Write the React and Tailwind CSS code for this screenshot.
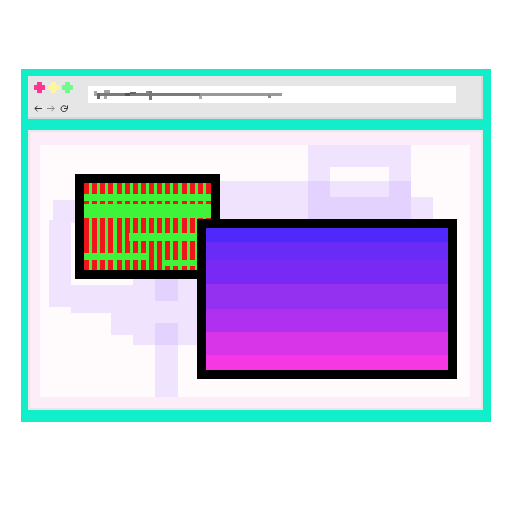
import React from "react";

const L = "#efe3fd";
const D = "#e2d2fd";
const W = "#fffbfd";

function Cross({ color }) {
  return (
    <svg width="11" height="11" viewBox="0 0 11 11" shapeRendering="crispEdges">
      <rect x="3" y="0" width="5" height="11" fill={color} />
      <rect x="0" y="3" width="11" height="5" fill={color} />
    </svg>
  );
}

function Canvas() {
  return (
    <svg width="430" height="252" viewBox="0 0 430 252" shapeRendering="crispEdges" className="absolute left-0 top-0">
      <rect x="268" y="0" width="103" height="36" fill={L} />
      <rect x="290" y="22" width="59" height="14" fill={W} />
      <rect x="268" y="36" width="103" height="60" fill={D} />
      <rect x="290" y="36" width="59" height="16" fill={L} />
      <rect x="371" y="52" width="22" height="22" fill={L} />
      <rect x="180" y="36" width="88" height="40" fill={L} />
      <rect x="13" y="55" width="255" height="20" fill={L} />
      <rect x="9" y="75" width="188" height="65" fill={L} />
      <rect x="31" y="78" width="62" height="62" fill={W} />
      <rect x="9" y="140" width="22" height="22" fill={L} />
      <rect x="31" y="140" width="40" height="28" fill={L} />
      <rect x="71" y="140" width="22" height="50" fill={L} />
      <rect x="93" y="140" width="22" height="60" fill={L} />
      <rect x="115" y="120" width="23" height="132" fill={L} />
      <rect x="115" y="120" width="23" height="36" fill={D} />
      <rect x="115" y="178" width="23" height="22" fill={D} />
      <rect x="138" y="134" width="19" height="66" fill={L} />
    </svg>
  );
}

function GreenPattern() {
  const stripes = Array.from({ length: 16 }, (_, i) => Math.round(i * 8.13));
  const G = "#3ff23a";
  return (
    <svg width="127" height="87" viewBox="0 0 127 87" shapeRendering="crispEdges" className="block">
      <rect x="0" y="0" width="127" height="87" fill={G} />
      {stripes.map((x) => (
        <rect key={x} x={x} y="0" width="5" height="87" fill="#f0151a" />
      ))}
      <rect x="0" y="11" width="127" height="7" fill={G} />
      <rect x="0" y="21" width="127" height="14" fill={G} />
      <rect x="45" y="50" width="82" height="8" fill={G} />
      <rect x="0" y="70" width="64" height="7" fill={G} />
      <rect x="79" y="77" width="48" height="6" fill={G} />
    </svg>
  );
}

function UrlScribble() {
  return (
    <svg width="200" height="12" viewBox="0 0 200 12" shapeRendering="crispEdges" className="absolute left-[6px] top-[3px]">
      <rect x="0" y="2" width="3" height="5" fill="#a3a3a3" />
      <rect x="3" y="4" width="3" height="6" fill="#666" />
      <rect x="6" y="4" width="100" height="3" fill="#7a7a7a" />
      <rect x="10" y="1" width="6" height="3" fill="#a3a3a3" />
      <rect x="10" y="7" width="3" height="3" fill="#a3a3a3" />
      <rect x="31" y="4" width="5" height="3" fill="#555" />
      <rect x="36" y="3" width="6" height="2" fill="#666" />
      <rect x="52" y="2" width="6" height="3" fill="#888" />
      <rect x="55" y="2" width="3" height="9" fill="#777" />
      <rect x="106" y="4" width="82" height="3" fill="#999" />
      <rect x="105" y="7" width="3" height="3" fill="#aaa" />
      <rect x="174" y="6" width="3" height="3" fill="#888" />
    </svg>
  );
}

export default function App() {
  return (
    <div className="w-[512px] h-[512px] bg-white pt-[69px] pl-[21px]">
      <div className="w-[470px] h-[353px] bg-[#12edca] pt-[7px] pl-[7px] flex flex-col">
        <div className="w-[455px] h-[43px] bg-[#e6e6e6] border-r-2 border-b-2 border-[#d8d8d8] flex pl-[6px] pt-[6px]">
          <div className="flex flex-col">
            <div className="flex gap-[3px]">
              <Cross color="#ff3596" />
              <Cross color="#fff59b" />
              <Cross color="#6cfd8b" />
            </div>
            <div className="flex mt-[12px] gap-[5px]">
              <svg width="8" height="7" viewBox="0 0 8 7">
                <path d="M8 3.5H1M3.5 0.8L0.8 3.5L3.5 6.2" stroke="#333" strokeWidth="1" fill="none" />
              </svg>
              <svg width="8" height="7" viewBox="0 0 8 7">
                <path d="M0 3.5H7M4.5 0.8L7.2 3.5L4.5 6.2" stroke="#8a8a8a" strokeWidth="1" fill="none" />
              </svg>
              <svg width="8" height="7" viewBox="0 0 8 7">
                <path d="M6.6 2.2A3 3 0 1 0 7 4.2" stroke="#333" strokeWidth="1" fill="none" />
                <path d="M4 3.5H7.5V0.5" stroke="#333" strokeWidth="1" fill="none" />
              </svg>
            </div>
          </div>
          <div className="relative ml-[15px] mt-[4px] w-[368px] h-[17px] bg-white">
            <UrlScribble />
          </div>
        </div>
        <div className="mt-[11px] w-[455px] h-[280px] border-2 border-[#e7e7e7] bg-[#fdedf8] pl-[10px] pt-[13px]">
          <div className="relative w-[430px] h-[252px] bg-[#fffbfd]">
            <Canvas />
            <div className="absolute left-[35px] top-[29px] border-[9px] border-black bg-black">
              <GreenPattern />
            </div>
            <div className="absolute left-[157px] top-[74px] border-[9px] border-black flex flex-col w-[260px]">
              <div className="h-[14px] bg-[#4f28fb]" />
              <div className="h-[18px] bg-[#6b2bf7]" />
              <div className="h-[24px] bg-[#782af4]" />
              <div className="h-[25px] bg-[#9430f0]" />
              <div className="h-[23px] bg-[#b030ef]" />
              <div className="h-[23px] bg-[#d935e8]" />
              <div className="h-[15px] bg-[#f638e4]" />
            </div>
          </div>
        </div>
      </div>
    </div>
  );
}
